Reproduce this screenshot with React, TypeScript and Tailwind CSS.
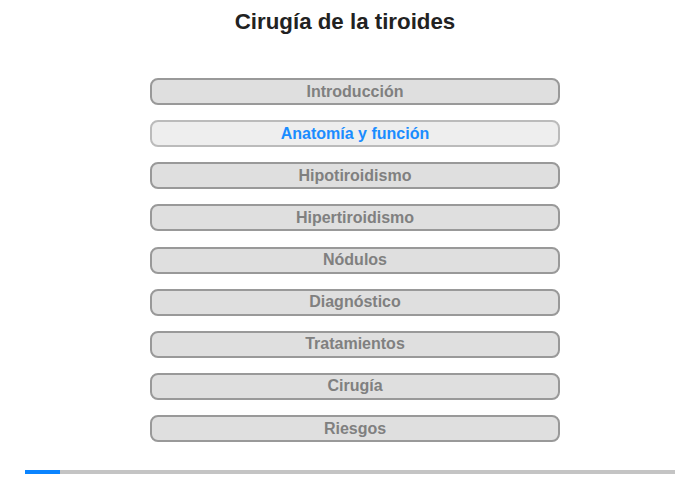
const items = [
  "Introducción",
  "Anatomía y función",
  "Hipotiroidismo",
  "Hipertiroidismo",
  "Nódulos",
  "Diagnóstico",
  "Tratamientos",
  "Cirugía",
  "Riesgos",
]

const App = (): JSX.Element => {
  const active = 1

  return (
    <div className="w-[700px] h-[480px] bg-white font-['Liberation_Sans',Arial,sans-serif] flex flex-col items-center">
      <h1 className="mt-[9px] mr-[10px] text-[22.3px] leading-[26px] font-bold text-[#222]">
        Cirugía de la tiroides
      </h1>
      <div className="mt-[43px] ml-[10px] flex flex-col gap-[15.125px]">
        {items.map((item, i) => (
          <div
            key={item}
            className={
              i === active
                ? "w-[410px] h-[27px] rounded-[8px] border-2 border-[#bbb] bg-[#eee] text-[#1a8cff] text-[16px] font-bold flex items-center justify-center"
                : "w-[410px] h-[27px] rounded-[8px] border-2 border-[#999] bg-[#dfdfdf] text-[#808080] text-[16px] font-bold flex items-center justify-center"
            }
          >
            {item}
          </div>
        ))}
      </div>
      <div className="mt-[28px] w-[650px] h-[4px] bg-[#c4c4c4] flex">
        <div className="w-[35px] h-full bg-[#0a84ff]" />
      </div>
    </div>
  )
}

export default App
